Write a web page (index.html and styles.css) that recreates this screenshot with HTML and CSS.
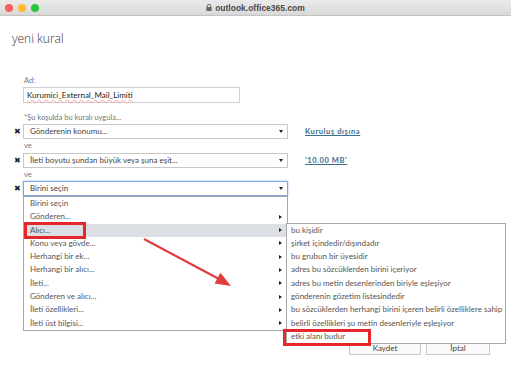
FILE: index.html
```html
<!DOCTYPE html>
<html lang="tr">

<head>
	<meta charset="UTF-8">
	<meta name="viewport" content="width=device-width, initial-scale=1.0">
	<title>yeni kural</title>
	<link rel="stylesheet" href="styles.css">
</head>

<body>
	<div class="titlebar">
		<div class="dots">
			<span class="dot red"></span>
			<span class="dot yellow"></span>
			<span class="dot green"></span>
		</div>
		<div class="url">
			<svg class="lock" width="6" height="7" viewBox="0 0 6 7">
				<path d="M1.3 3V2a1.7 1.7 0 0 1 3.4 0v1" fill="none" stroke="#6a6a6a" stroke-width="1"/>
				<rect x="0.3" y="3" width="5.4" height="4" rx="0.6" fill="#6a6a6a"/>
			</svg>
			outlook.office365.com
		</div>
	</div>

	<div class="page">
		<h1 class="page-title">yeni kural</h1>

		<div class="form">
			<div class="label label-name">Ad:</div>
			<div class="text-input"><span class="spell">Kurumici_External_Mail_Limiti</span></div>

			<div class="label label-cond">*Şu koşulda bu kuralı uygula...</div>

			<div class="cond-row">
				<span class="remove">✖</span>
				<div class="select">Gönderenin konumu...<span class="caret"></span></div>
				<a class="cond-link" href="#">Kuruluş dışına</a>
			</div>
			<div class="label label-and">ve</div>
			<div class="cond-row">
				<span class="remove">✖</span>
				<div class="select">İleti boyutu şundan büyük veya şuna eşit...<span class="caret"></span></div>
				<a class="cond-link" href="#">'10.00 MB'</a>
			</div>
			<div class="label label-and">ve</div>
			<div class="cond-row">
				<span class="remove">✖</span>
				<div class="select focused">Birini seçin<span class="caret"></span>
					<ul class="menu">
						<li>Birini seçin</li>
						<li class="has-sub">Gönderen...</li>
						<li class="has-sub active">Alıcı...
							<span class="mark mark-alici"></span>
							<ul class="submenu">
								<li>bu kişidir</li>
								<li>şirket içindedir/dışındadır</li>
								<li>bu grubun bir üyesidir</li>
								<li>adres bu sözcüklerden birini içeriyor</li>
								<li>adres bu metin desenlerinden biriyle eşleşiyor</li>
								<li>gönderenin gözetim listesindedir</li>
								<li>bu sözcüklerden herhangi birini içeren belirli özelliklere sahip</li>
								<li>belirli özellikleri şu metin desenleriyle eşleşiyor</li>
								<li class="marked">etki alanı budur<span class="mark mark-etki"></span></li>
							</ul>
						</li>
						<li class="has-sub">Konu veya gövde...</li>
						<li class="has-sub">Herhangi bir ek...</li>
						<li class="has-sub">Herhangi bir alıcı...</li>
						<li class="has-sub">İleti...</li>
						<li class="has-sub">Gönderen ve alıcı...</li>
						<li class="has-sub">İleti özellikleri...</li>
						<li class="has-sub">İleti üst bilgisi...</li>
					</ul>
				</div>
			</div>
		</div>

		<div class="actions">
			<button class="btn btn-save">Kaydet</button>
			<button class="btn btn-cancel">İptal</button>
		</div>
	</div>

	<svg class="pointer" width="511" height="378" viewBox="0 0 511 378">
		<line x1="144" y1="239" x2="219" y2="279" stroke="#e23b3b" stroke-width="2"/>
		<polygon points="231,286 214.6,283.6 220.4,272.8" fill="#e23b3b"/>
	</svg>
</body>

</html>
```

FILE: styles.css
```css
* {
	box-sizing: border-box;
}

body {
	margin: 0;
	width: 511px;
	height: 378px;
	overflow: hidden;
	position: relative;
	background: #fff;
	font-family: 'Lato', 'Liberation Sans', sans-serif;
	font-size: 8px;
	color: #444;
}

.titlebar {
	display: flex;
	align-items: center;
	height: 16px;
	padding-left: 5px;
	background: linear-gradient(#ebebeb, #d8d8d8);
	border-bottom: 1px solid #c4c4c4;
}

.dots {
	display: flex;
	gap: 5px;
}

.dot {
	width: 8px;
	height: 8px;
	border-radius: 50%;
}

.dot.red {
	background: #fc5f57;
}

.dot.yellow {
	background: #fdbc2e;
}

.dot.green {
	background: #28c840;
}

.url {
	flex: 1;
	margin-right: 39px;
	display: flex;
	justify-content: center;
	align-items: center;
	gap: 3px;
	font-family: 'Liberation Sans', sans-serif;
	font-size: 8.5px;
	font-weight: bold;
	color: #4a4a4a;
}

.page {
	padding-left: 12px;
}

.page-title {
	margin: 16px 0 0;
	font-family: 'Open Sans', sans-serif;
	font-weight: 300;
	font-size: 12px;
	line-height: 14px;
	color: #333;
}

.form {
	padding-left: 12px;
}

.label {
	color: #777;
	font-size: 7.5px;
}

.label-name {
	margin-top: 29px;
	line-height: 12px;
}

.text-input {
	margin-top: 0;
	margin-left: -1px;
	width: 217px;
	height: 16px;
	border: 1px solid #d0d0d0;
	padding-left: 3px;
	line-height: 14px;
	color: #222;
}

.spell {
	text-decoration: underline wavy #f2a0a0 1px;
	text-underline-offset: 1px;
}

.label-cond {
	margin-top: 9px;
	line-height: 12px;
}

.label-and {
	line-height: 13.5px;
}

.cond-row {
	display: flex;
	align-items: center;
	height: 15px;
	margin-left: -12px;
}

.remove {
	width: 11px;
	text-align: center;
	font-size: 7.5px;
	line-height: 15px;
	color: #222;
}

.select {
	position: relative;
	width: 265px;
	height: 15px;
	border: 1px solid #c8c8c8;
	padding-left: 6px;
	line-height: 13px;
	color: #444;
}

.select.focused {
	border-color: #7ea6e0;
	box-shadow: 0 0 2px #9bbdf0;
}

.caret {
	position: absolute;
	right: 4px;
	top: 5px;
	border-left: 2.5px solid transparent;
	border-right: 2.5px solid transparent;
	border-top: 3px solid #222;
}

.cond-link {
	margin-left: 17px;
	white-space: nowrap;
	line-height: 15px;
	color: #3b6e8f;
	font-weight: bold;
	font-size: 7.5px;
	letter-spacing: 0.6px;
}

.menu,
.submenu {
	list-style: none;
	margin: 0;
	padding: 0;
	background: #fff;
	border: 1px solid #a8a8a8;
}

.menu {
	position: absolute;
	top: 14px;
	left: -1px;
	width: 265px;
	z-index: 2;
}

.menu li {
	position: relative;
	height: 13.3px;
	line-height: 13.3px;
	padding-left: 6px;
	color: #555;
	white-space: nowrap;
}

.menu li.has-sub::after {
	content: '';
	position: absolute;
	right: 5px;
	top: 4.5px;
	border-top: 2.5px solid transparent;
	border-bottom: 2.5px solid transparent;
	border-left: 3px solid #222;
}

.menu li.active {
	background: #dcdfe4;
}

.submenu {
	position: absolute;
	top: -1px;
	left: 262px;
	width: 220px;
	z-index: 3;
}

.submenu li {
	padding-left: 4px;
	background: #fff;
}

.submenu li::after {
	display: none;
}

.mark {
	position: absolute;
	border: 3px solid #e5262b;
}

.mark-alici {
	left: 0;
	top: -2px;
	width: 62px;
	height: 17px;
}

.mark-etki {
	left: -4px;
	top: -1px;
	width: 88px;
	height: 17px;
}

.actions {
	display: flex;
	justify-content: flex-end;
	gap: 5px;
	margin-top: 144px;
	padding-right: 21px;
}

.btn {
	height: 15px;
	padding: 0;
	border: 1px solid #c8c8c8;
	background: #fafafa;
	font-family: inherit;
	font-size: 8px;
	color: #444;
}

.btn-save {
	width: 72px;
}

.btn-cancel {
	width: 64px;
}

.pointer {
	position: absolute;
	left: 0;
	top: 0;
	z-index: 4;
	pointer-events: none;
}
```
